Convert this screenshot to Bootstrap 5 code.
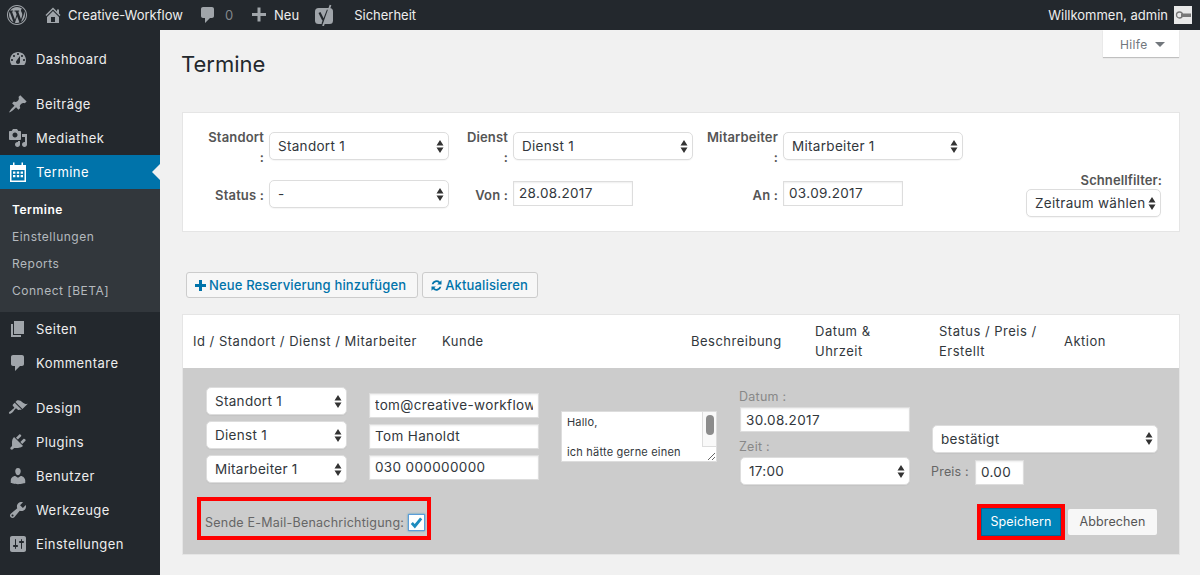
<!DOCTYPE html>
<html lang="de">
<head>
  <meta charset="UTF-8">
  <title>Termine</title>
  <meta name="viewport" content="width=device-width, initial-scale=1">
  <link href="https://cdn.jsdelivr.net/npm/bootstrap@5.3.0/dist/css/bootstrap.min.css" rel="stylesheet">
  <style>
    body { font-family: Inter, "Liberation Sans", sans-serif; font-size: 13px; line-height: 20px; background: #f1f1f1; color: #444; }
    svg { fill: currentColor; flex: none; display: block; }

    /* top bar */
    .wp-bar { height: 30px; background: #23282d; color: #eee; flex-wrap: nowrap; justify-content: flex-start; }
    .wp-bar svg { color: #a0a5aa; }
    .bar-zero { color: #82878c; }
    .bar-avatar { margin-left: 6px; margin-right: 8px; }
    .ml-7 { margin-left: 7px; }
    .ml-15 { margin-left: 15px; }
    .ml-16 { margin-left: 16px; }
    .ml-21 { margin-left: 21px; }
    .ml-5 { margin-left: 5px; }

    /* left menu */
    .wp-side { width: 160px; flex: none; background: #23282d; padding-top: 12px; min-height: 545px; }
    .side-link { height: 34px; display: flex; align-items: center; color: #eee; text-decoration: none; padding-left: 8px; gap: 8px; position: relative; letter-spacing: .45px; }
    .side-link svg { color: #a0a5aa; }
    .side-link.is-current { background: #0073aa; color: #fff; }
    .side-link.is-current svg { color: #fff; }
    .side-link.is-current::after { content: ""; position: absolute; right: 0; top: 9px; border: 8px solid transparent; border-right-color: #f1f1f1; border-left-width: 0; }
    .side-gap { height: 11px; }
    .side-sub { background: #32373c; padding: 7px 0 8px; }
    .side-sub a { display: block; height: 27px; line-height: 27px; padding-left: 12px; color: #b4b9be; text-decoration: none; font-size: 12px; letter-spacing: .5px; }
    .side-sub a.is-current { color: #fff; font-weight: 600; }

    /* content */
    .wp-main { flex: 1; padding: 0 20px 0 22px; min-width: 0; }
    .help-tab { float: right; width: 76px; height: 27px; margin-right: 1px; background: #fff; box-shadow: 0 1px 1px rgba(0,0,0,.2); color: #72777c; font-size: 12px; line-height: 29px; padding-left: 17px; letter-spacing: .35px; }
    .help-tab i { display: inline-block; border: 5px solid transparent; border-top-color: #72777c; border-bottom-width: 0; margin-left: 7px; vertical-align: 2px; }
    .page-title { font-size: 22px; line-height: 30px; font-weight: 400; color: #23282d; margin: 0 0 33px -1px; padding-top: 19px; }

    .filter-box { background: #fff; border: 1px solid #e5e5e5; padding: 14px 18px 14px 17px; height: 120px; margin-bottom: 40px; }
    .filter-grid { display: grid; grid-template-columns: 64px 180px 54px 180px 80px 180px 1fr 135px; grid-template-rows: 40px 46px; row-gap: 4px; column-gap: 5px; align-items: center; }
    .filter-label { text-align: right; font-weight: 600; color: #555; margin: 0; letter-spacing: .15px; white-space: nowrap; }
    .low-label { padding-top: 2px; }
    .top-cell { margin-top: -2px; }
    .nudge-up { margin-top: -2px; }
    .quick-label { text-align: right; font-weight: 600; color: #555; margin: 0 -1px 0 0; line-height: 18px; letter-spacing: .1px; }

    .pick.form-select { height: 28px; font-size: 13.5px; line-height: 20px; padding: 0 14px 0 8px; border: 1px solid #ddd; border-radius: 5px; color: #32373c; background-color: #fff; box-shadow: 0 1px 1px rgba(0,0,0,.04); letter-spacing: .3px;
      background-image: url("data:image/svg+xml,%3csvg xmlns='http://www.w3.org/2000/svg' viewBox='0 0 8 13'%3e%3cpath fill='%23333' d='M4 0l3.500 5.500h-7zM4 13L.5 7.500h7z'/%3e%3c/svg%3e"); background-size: 8px 13px; background-position: right 4px center; }
    .plain.form-control { height: 25px; font-size: 13.5px; line-height: 20px; padding: 0 5px; border: 1px solid #ddd; border-radius: 0; color: #32373c; box-shadow: inset 0 1px 2px rgba(0,0,0,.07); letter-spacing: .35px; }
    .w-120 { width: 120px; }

    .tool-btn { background: #f7f7f7; border: 1px solid #ccc; border-radius: 3px; color: #0073aa; font-size: 13px; font-weight: 500; height: 26px; padding: 0 11px 0 7px; display: flex; align-items: center; gap: 2px; line-height: 1; letter-spacing: .15px; }
    .tool-btn-short { padding-right: 9px; }
    .tool-row { margin-bottom: 16px; padding-left: 4px; gap: 4px; }

    .termin-table { width: 998px; margin: 0; table-layout: fixed; background: #fff; border: 1px solid #e5e5e5; border-collapse: separate; border-spacing: 0; }
    .termin-table th { font-weight: 400; color: #32373c; font-size: 13px; line-height: 20px; padding: 0 10px 1px; height: 53px; vertical-align: middle; background: #fff; border: 0; letter-spacing: .5px; }
    .termin-table td { padding: 0; border: 0; background: #ccc; }

    .edit-panel { padding: 19px 22px 14px 14px; height: 186px; background: #ccc; }
    .edit-row { display: flex; align-items: center; padding-left: 9px; }
    .stack-a { width: 141px; flex: none; gap: 6px; margin-bottom: 2px; }
    .stack-b { width: 170px; flex: none; margin-left: 22px; gap: 6px; }
    .memo-wrap { width: 156px; height: 51px; margin-left: 22px; position: relative; flex: none; }
    .memo { width: 156px; height: 51px; font-size: 11px; line-height: 15px; padding: 3px 20px 3px 5px; border: 1px solid #ddd; border-radius: 0; color: #32373c; resize: both; overflow: hidden; font-family: inherit; display: block; outline: 0; background: #fff; letter-spacing: .2px; }
    .memo-bar { position: absolute; top: 1px; right: 1px; width: 14px; height: 35px; background: #f9f9f9; border-left: 1px solid #ddd; border-bottom: 1px solid #ddd; }
    .memo-bar::after { content: ""; position: absolute; left: 3px; top: 3px; width: 8px; height: 20px; border-radius: 4px; background: #8c8c8c; }
    .stack-c { width: 170px; flex: none; margin-left: 23px; align-self: flex-start; margin-top: 2px; }
    .soft-label { color: #888; font-size: 12.5px; line-height: 16px; margin: 0 0 2px -1px; letter-spacing: .25px; }
    .soft-label.second { margin-top: 7px; }
    .stack-d { width: 226px; flex: none; margin-left: 22px; padding-top: 37px; }
    .price-line { margin-top: 7px; margin-left: -1px; color: #666; gap: 6px; font-size: 12.5px; letter-spacing: .2px; }
    .price-input { width: 49px; }

    .edit-foot { display: flex; justify-content: space-between; align-items: flex-end; margin-top: 12px; }
    .red-frame { border: 4px solid #f00; }
    .mail-frame { height: 43px; width: 234px; display: flex; align-items: center; padding: 8px 2px 0 4px; color: #666; font-size: 12.5px; white-space: nowrap; justify-content: space-between; letter-spacing: .23px; }
    .mail-check.form-check-input { width: 17px; height: 17px; margin: 0; border: 1px solid #5b9dd9; border-radius: 0; background-color: #fff; flex: none; box-shadow: 0 0 2px rgba(30,140,190,.8);
      background-image: url("data:image/svg+xml,%3csvg xmlns='http://www.w3.org/2000/svg' viewBox='0 0 16 16'%3e%3cpath fill='none' stroke='%231e8cbe' stroke-width='3' d='M3 8.500l3.200 3.500L13 3.500'/%3e%3c/svg%3e"); background-size: 15px; }
    .save-frame { height: 36px; width: 88px; }
    .save-btn { width: 80px; height: 28px; background: #0085ba; border: 1px solid #006799; border-radius: 0; color: #fff; font-size: 12.5px; padding: 1px 0 0; display: block; letter-spacing: .1px; }
    .cancel-btn { width: 89px; height: 26px; background: #f7f7f7; border: 0; border-radius: 2px; color: #555; font-size: 12.5px; padding: 1px 0 0; letter-spacing: .1px; }
    .foot-right { display: flex; align-items: center; gap: 3px; }
  </style>
</head>
<body>

  <!-- Admin bar -->
  <nav class="navbar p-0 wp-bar">
    <svg class="ml-7" width="20" height="20" viewBox="0 0 20 20"><path d="M20 10c0-5.520-4.480-10-10-10S0 4.480 0 10s4.480 10 10 10 10-4.480 10-10zM10 1.010c4.970 0 8.990 4.020 8.990 8.990s-4.020 8.990-8.990 8.990S1.010 14.970 1.010 10 5.030 1.010 10 1.010zM8.010 14.820L4.960 6.610c.49-.03 1.050-.08 1.050-.08.43-.05.38-1.010-.06-.99 0 0-1.290.1-2.130.1-.15 0-.33 0-.52-.01 1.440-2.170 3.900-3.600 6.700-3.600 2.090 0 3.990.79 5.410 2.090-.6-.1-1.450.35-1.450 1.450 0 .66.38 1.220.79 1.880.31.54.5 1.220.5 2.210 0 1.340-1.270 4.480-1.270 4.480l-2.710-7.500c.48-.03.75-.16.75-.16.43-.05.38-1.100-.05-1.080 0 0-1.300.11-2.140.11-.78 0-2.110-.11-2.110-.11-.43-.02-.48 1.060-.05 1.080l.84.08 1.120 3.040zm6.020 2.150L16.640 10s.67-1.690.39-3.810c.63 1.140.94 2.420.94 3.810 0 2.960-1.560 5.580-3.940 6.970zM2.680 6.770L6.500 17.250c-2.670-1.300-4.470-4.080-4.470-7.250 0-1.160.2-2.230.65-3.230zm7.450 4.530l2.290 6.250c-.75.27-1.570.42-2.420.42-.72 0-1.410-.11-2.060-.3z"/></svg>
    <svg class="ml-16" width="20" height="20" viewBox="0 0 20 20"><path fill-rule="evenodd" d="M16 8.500l1.530 1.530-1.060 1.060L10 4.620l-6.470 6.470-1.060-1.060L10 2.500l4 4v-2h2v4zm-6-2.460l6 5.990V18H4v-5.970zM12 17v-5H8v5h4z"/></svg>
    <span class="ml-5">Creative-Workflow</span>
    <svg class="ml-15" width="20" height="20" viewBox="0 0 20 20"><path d="M5 2h9c1.100 0 2 .9 2 2v7c0 1.100-.9 2-2 2h-2l-5 5v-5H5c-1.100 0-2-.9-2-2V4c0-1.100.9-2 2-2z"/></svg>
    <span class="ml-7 bar-zero">0</span>
    <svg class="ml-16" width="20" height="20" viewBox="0 0 20 20"><path d="M17 8v3h-5.500v5.500h-3V11H3V8h5.500V2.500h3V8z"/></svg>
    <span class="ml-5">Neu</span>
    <svg class="ml-16" width="18" height="22" viewBox="0 0 18 22">
      <rect x="0" y="4" width="18" height="16" rx="3.500"/>
      <path fill="none" stroke="#23282d" stroke-width="2.200" d="M4.500 8.500l3.700 7.500M13 6l-5.500 14"/>
      <path fill="none" stroke="#a0a5aa" stroke-width="1.800" d="M15.500 1l-7.500 21"/>
    </svg>
    <span class="ml-21">Sicherheit</span>
    <span class="ms-auto">Willkommen, admin</span>
    <svg class="bar-avatar" width="18" height="18" viewBox="0 0 18 18">
      <rect width="18" height="18" fill="#e8e8e8"/>
      <circle cx="5.500" cy="9" r="3" fill="none" stroke="#777" stroke-width="1.300"/>
      <rect x="7" y="7.500" width="10" height="3.500" fill="#777"/>
    </svg>
  </nav>

  <div class="d-flex">
    <!-- Menu -->
    <aside class="wp-side">
      <a class="side-link" href="#"><svg width="20" height="20" viewBox="0 0 20 20"><path fill-rule="evenodd" d="M3.760 16h12.480c1.100-1.370 1.760-3.110 1.760-5 0-4.420-3.580-8-8-8s-8 3.580-8 8c0 1.890.66 3.630 1.760 5zM10 4c.55 0 1 .45 1 1s-.45 1-1 1-1-.45-1-1 .45-1 1-1zM6 6c.55 0 1 .45 1 1s-.45 1-1 1-1-.45-1-1 .45-1 1-1zm8 0c.55 0 1 .45 1 1s-.45 1-1 1-1-.45-1-1 .45-1 1-1zm-5.370 5.550L12 7v6c0 1.100-.9 2-2 2s-2-.9-2-2c0-.57.24-1.080.63-1.450zM4 10c.55 0 1 .45 1 1s-.45 1-1 1-1-.45-1-1 .45-1 1-1zm12 0c.55 0 1 .45 1 1s-.45 1-1 1-1-.45-1-1 .45-1 1-1z"/></svg>Dashboard</a>
      <div class="side-gap"></div>
      <a class="side-link" href="#"><svg width="20" height="20" viewBox="0 0 20 20"><path d="M10.440 3.020l1.820-1.820 6.360 6.350-1.830 1.820c-1.050-.68-2.480-.57-3.410.36l-.75.75c-.92.93-1.040 2.350-.35 3.410l-1.830 1.820-2.410-2.410-2.800 2.790c-.42.42-3.380 2.710-3.800 2.290s1.860-3.390 2.280-3.810l2.790-2.790L4.100 9.360l1.830-1.820c1.050.69 2.480.57 3.400-.36l.75-.75c.93-.92 1.050-2.350.36-3.410z"/></svg>Beiträge</a>
      <a class="side-link" href="#"><svg width="20" height="20" viewBox="0 0 20 20"><path fill-rule="evenodd" d="M13 11V4c0-.55-.45-1-1-1h-1.670L9 1H5L3.670 3H2c-.55 0-1 .45-1 1v7c0 .55.45 1 1 1h10c.55 0 1-.45 1-1zM7 4.500c1.380 0 2.500 1.120 2.500 2.500S8.380 9.500 7 9.500 4.500 8.380 4.500 7 5.620 4.500 7 4.500zM14 6h5v10.500c0 1.380-1.120 2.500-2.500 2.500S14 17.880 14 16.500s1.120-2.500 2.500-2.500c.17 0 .34.02.5.05V9h-3V6zm-4 8.050V13h2v3.500c0 1.380-1.120 2.500-2.500 2.500S7 17.880 7 16.500 8.120 14 9.500 14c.17 0 .34.02.5.05z"/></svg>Mediathek</a>
      <a class="side-link is-current" href="#"><svg width="20" height="22" viewBox="0 0 20 22"><path fill-rule="evenodd" d="M2 4h3V1.500h1.500V4h7V1.500H15V4h3v17H2zM3.500 9v10.500h13V9zM5 10.500h2.400v2.200H5zm3.800 0h2.400v2.200H8.800zm3.800 0H15v2.200h-2.400zM5 14h2.400v2.200H5zm3.800 0h2.400v2.200H8.800zm3.800 0H15v2.200h-2.400z"/></svg>Termine</a>
      <div class="side-sub">
        <a class="is-current" href="#">Termine</a>
        <a href="#">Einstellungen</a>
        <a href="#">Reports</a>
        <a href="#">Connect [BETA]</a>
      </div>
      <a class="side-link" href="#"><svg width="20" height="20" viewBox="0 0 20 20"><path d="M6 15V2h10v13H6zm-1 1h8v2H3V5h2v11z"/></svg>Seiten</a>
      <a class="side-link" href="#"><svg width="20" height="20" viewBox="0 0 20 20"><path d="M5 2h9c1.100 0 2 .9 2 2v7c0 1.100-.9 2-2 2h-2l-5 5v-5H5c-1.100 0-2-.9-2-2V4c0-1.100.9-2 2-2z"/></svg>Kommentare</a>
      <div class="side-gap"></div>
      <a class="side-link" href="#"><svg width="20" height="20" viewBox="0 0 20 20"><path d="M14.480 11.060L7.410 3.990l1.500-1.500c.5-.56 2.300-.47 3.510.32 1.210.8 1.430 1.280 2.910 2.100 1.180.64 2.450 1.260 4.450.85zm-.71.71L6.700 4.700 4.930 6.470c-.39.39-.39 1.020 0 1.410l1.060 1.060c.39.39.39 1.030 0 1.420-.6.6-1.430 1.110-2.210 1.690-.35.26-.7.53-1.010.84C1.430 13.230.4 14.840 1.120 15.560c.71.71 2.340-.31 3.690-1.650.31-.31.58-.66.85-1.020.57-.78 1.080-1.610 1.690-2.210.39-.39 1.020-.39 1.410 0l1.060 1.060c.39.39 1.020.39 1.410 0z"/></svg>Design</a>
      <a class="side-link" href="#"><svg width="20" height="20" viewBox="0 0 20 20"><path d="M13.110 4.360L9.870 7.600 8 5.730l3.240-3.240c.35-.34 1.050-.2 1.560.32.52.51.66 1.210.31 1.550zm-8 1.770l.91-1.120 9.010 9.010-1.190.84c-.71.71-2.630 1.160-3.820 1.160H6.140L4.900 17.260c-.59.59-1.540.59-2.120 0-.59-.58-.59-1.530 0-2.120l1.240-1.240v-3.880c0-1.130.4-3.190 1.090-3.890zm7.260 3.970l3.240-3.240c.34-.35 1.040-.21 1.550.31.52.51.66 1.210.31 1.550l-3.240 3.250z"/></svg>Plugins</a>
      <a class="side-link" href="#"><svg width="20" height="20" viewBox="0 0 20 20"><path d="M10 9.250c-2.270 0-2.730-3.440-2.730-3.440C7 4.020 7.820 2 9.970 2c2.160 0 2.980 2.020 2.710 3.810 0 0-.41 3.440-2.680 3.440zm0 2.570L12.720 10c2.390 0 4.520 2.330 4.520 4.530v2.490s-3.650 1.130-7.240 1.130c-3.650 0-7.240-1.130-7.240-1.130v-2.490c0-2.250 1.940-4.480 4.470-4.480z"/></svg>Benutzer</a>
      <a class="side-link" href="#"><svg width="20" height="20" viewBox="0 0 20 20"><path fill-rule="evenodd" d="M16.680 9.770c-1.340 1.340-3.300 1.670-4.950.99l-5.410 6.520c-.99.99-2.590.99-3.580 0s-.99-2.590 0-3.570l6.520-5.420c-.68-1.650-.35-3.610.99-4.950 1.280-1.280 3.120-1.620 4.720-1.060l-2.890 2.890 2.820 2.820 2.860-2.870c.53 1.580.18 3.390-1.080 4.650zM3.810 16.210c.4.39 1.040.39 1.430 0 .4-.4.4-1.040 0-1.430-.39-.4-1.030-.4-1.430 0-.39.39-.39 1.030 0 1.430z"/></svg>Werkzeuge</a>
      <a class="side-link" href="#"><svg width="20" height="20" viewBox="0 0 20 20"><path fill-rule="evenodd" d="M18 16V4c0-1.100-.9-2-2-2H4c-1.100 0-2 .9-2 2v12c0 1.100.9 2 2 2h12c1.100 0 2-.9 2-2zM8 11h1c.55 0 1 .45 1 1s-.45 1-1 1H8v1.500c0 .28-.22.5-.5.5s-.5-.22-.5-.5V13H6c-.55 0-1-.45-1-1s.45-1 1-1h1V5.500c0-.28.22-.5.5-.5s.5.22.5.5V11zm5-2h-1c-.55 0-1-.45-1-1s.45-1 1-1h1V5.500c0-.28.22-.5.5-.5s.5.22.5.5V7h1c.55 0 1 .45 1 1s-.45 1-1 1h-1v5.500c0 .28-.22.5-.5.5s-.5-.22-.5-.5V9z"/></svg>Einstellungen</a>
    </aside>

    <main class="wp-main">
      <div class="help-tab">Hilfe<i></i></div>
      <h1 class="page-title">Termine</h1>

      <!-- Filter -->
      <div class="filter-box">
        <div class="filter-grid">
          <label class="filter-label">Standort<br>:</label>
          <select class="form-select pick top-cell"><option>Standort 1</option></select>
          <label class="filter-label">Dienst<br>:</label>
          <select class="form-select pick top-cell"><option>Dienst 1</option></select>
          <label class="filter-label">Mitarbeiter<br>:</label>
          <select class="form-select pick top-cell"><option>Mitarbeiter 1</option></select>
          <span></span><span></span>

          <label class="filter-label low-label">Status :</label>
          <select class="form-select pick"><option>-</option></select>
          <label class="filter-label low-label">Von :</label>
          <input class="form-control plain w-120 nudge-up" value="28.08.2017">
          <label class="filter-label low-label">An :</label>
          <input class="form-control plain w-120 nudge-up" value="03.09.2017">
          <span></span>
          <div>
            <div class="quick-label">Schnellfilter:</div>
            <select class="form-select pick"><option>Zeitraum wählen</option></select>
          </div>
        </div>
      </div>

      <div class="d-flex tool-row">
        <button class="btn tool-btn" type="button"><svg width="13" height="13" viewBox="0 0 13 13"><path d="M5 1h3v4h4v3H8v4H5V8H1V5h4z"/></svg>Neue Reservierung hinzufügen</button>
        <button class="btn tool-btn tool-btn-short" type="button"><svg width="13" height="13" viewBox="0 0 13 13"><path d="M1.700 5.200A5 5 0 0 1 10 2.700L11.500 1.200V5.500H7.200L8.700 4A3.200 3.200 0 0 0 3.500 5.200zM11.300 7.800A5 5 0 0 1 3 10.300L1.500 11.800V7.500h4.300L4.300 9a3.200 3.200 0 0 0 5.200-1.200z"/></svg>Aktualisieren</button>
      </div>

      <table class="table termin-table">
        <colgroup><col style="width:249px"><col style="width:249px"><col style="width:124px"><col style="width:124px"><col style="width:125px"><col></colgroup>
        <thead>
          <tr>
            <th>Id / Standort / Dienst / Mitarbeiter</th>
            <th>Kunde</th>
            <th>Beschreibung</th>
            <th>Datum &amp; Uhrzeit</th>
            <th>Status / Preis / Erstellt</th>
            <th>Aktion</th>
          </tr>
        </thead>
        <tbody>
          <tr>
            <td colspan="6">
              <div class="edit-panel">
                <div class="edit-row">
                  <div class="d-flex flex-column stack-a">
                    <select class="form-select pick"><option>Standort 1</option></select>
                    <select class="form-select pick"><option>Dienst 1</option></select>
                    <select class="form-select pick"><option>Mitarbeiter 1</option></select>
                  </div>
                  <div class="d-flex flex-column stack-b">
                    <input class="form-control plain" value="tom@creative-workflow">
                    <input class="form-control plain" value="Tom Hanoldt">
                    <input class="form-control plain" value="030 000000000">
                  </div>
                  <div class="memo-wrap">
                    <textarea class="memo">Hallo,

ich hätte gerne einen</textarea>
                    <div class="memo-bar"></div>
                  </div>
                  <div class="stack-c">
                    <div class="soft-label">Datum :</div>
                    <input class="form-control plain" value="30.08.2017">
                    <div class="soft-label second">Zeit :</div>
                    <select class="form-select pick"><option>17:00</option></select>
                  </div>
                  <div class="stack-d">
                    <select class="form-select pick"><option>bestätigt</option></select>
                    <div class="d-flex align-items-center price-line">Preis : <input class="form-control plain price-input" value="0.00"></div>
                  </div>
                </div>
                <div class="edit-foot">
                  <label class="red-frame mail-frame">Sende E-Mail-Benachrichtigung: <input class="form-check-input mail-check" type="checkbox" checked></label>
                  <div class="foot-right">
                    <div class="red-frame save-frame"><button class="btn save-btn" type="button">Speichern</button></div>
                    <button class="btn cancel-btn" type="button">Abbrechen</button>
                  </div>
                </div>
              </div>
            </td>
          </tr>
        </tbody>
      </table>
    </main>
  </div>

</body>
</html>
